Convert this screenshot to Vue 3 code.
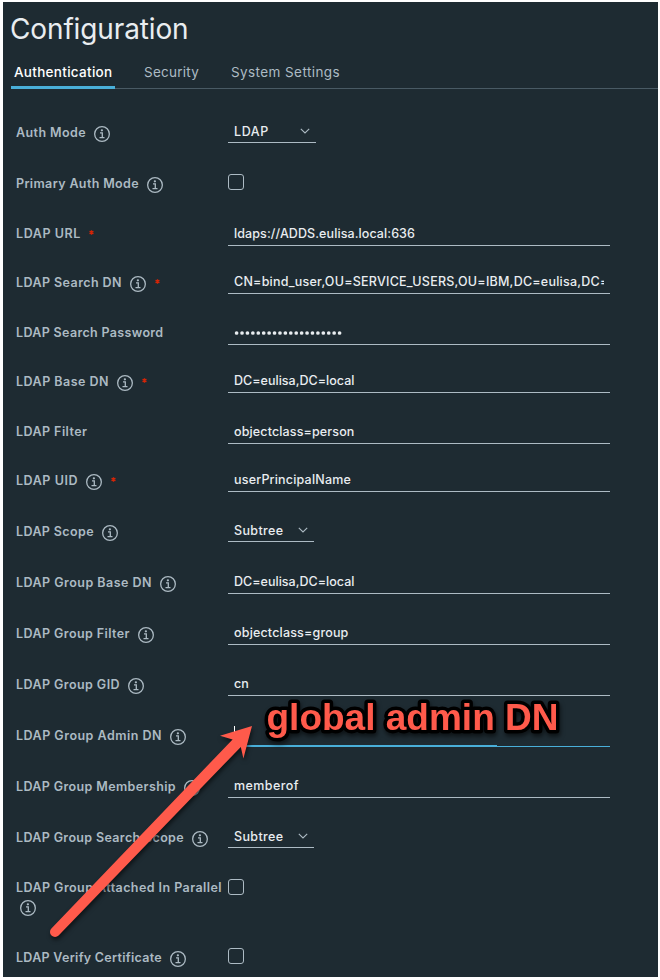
<script setup>
// Spreads the letters of a text so that it fills the given width.
const vFit = {
  mounted(el, { value }) {
    const natural = el.getBoundingClientRect().width
    el.style.letterSpacing = (value - natural) / el.textContent.length + 'px'
  },
}

const tabs = [
  { text: 'Authentication', width: 98.5, active: true },
  { text: 'Security', width: 55 },
  { text: 'System Settings', width: 109 },
]

const rows = [
  { label: 'Auth Mode', w: 70, info: true, h: 51, kind: 'select', value: 'LDAP', vw: 35, wide: true },
  { label: 'Primary Auth Mode', w: 123, info: true, h: 50, kind: 'check' },
  { label: 'LDAP URL', w: 65, required: true, h: 49, kind: 'input', value: 'ldaps://ADDS.eulisa.local:636', vw: 181, low: true },
  { label: 'LDAP Search DN', w: 106, info: true, required: true, h: 50, kind: 'input', value: 'CN=bind_user,OU=SERVICE_USERS,OU=IBM,DC=eulisa,DC=', vw: 374.5 },
  { label: 'LDAP Search Password', w: 147.5, h: 49, kind: 'password', low: true },
  { label: 'LDAP Base DN', w: 93, info: true, required: true, h: 50, kind: 'input', value: 'DC=eulisa,DC=local', vw: 120.5 },
  { label: 'LDAP Filter', w: 71.5, h: 49, kind: 'input', value: 'objectclass=person', vw: 120.5, low: true },
  { label: 'LDAP UID', w: 62, info: true, required: true, h: 51, kind: 'input', value: 'userPrincipalName', vw: 117 },
  { label: 'LDAP Scope', w: 78, info: true, h: 51, kind: 'select', value: 'Subtree', vw: 49.5 },
  { label: 'LDAP Group Base DN', w: 136, info: true, h: 51, kind: 'input', value: 'DC=eulisa,DC=local', vw: 120.5 },
  { label: 'LDAP Group Filter', w: 114, info: true, h: 51, kind: 'input', value: 'objectclass=group', vw: 114.5 },
  { label: 'LDAP Group GID', w: 104, info: true, h: 51, kind: 'input', value: 'cn', vw: 15 },
  { label: 'LDAP Group Admin DN', w: 146, info: true, h: 51, kind: 'focus' },
  { label: 'LDAP Group Membership', w: 160, info: true, h: 51, kind: 'input', value: 'memberof', vw: 65 },
  { label: 'LDAP Group Search Scope', w: 168, info: true, h: 50, kind: 'select', value: 'Subtree', vw: 49.5 },
  { label: 'LDAP Group Attached In Parallel', w: 206, info: true, wrap: true, h: 70, kind: 'check', low: true },
  { label: 'LDAP Verify Certificate', w: 146, info: true, h: 30, kind: 'check' },
]
</script>

<template>
  <div class="frame">
    <main class="panel">
      <h1><span v-fit="178.5">Configuration</span></h1>
      <nav class="tabs">
        <a v-for="t in tabs" :key="t.text" :class="['tab', { active: t.active }]"><span v-fit="t.width">{{ t.text }}</span></a>
      </nav>
      <form class="form">
        <div v-for="r in rows" :key="r.label" class="row" :style="{ height: r.h + 'px' }">
          <div :class="['label', { wrap: r.wrap }]">
            <span v-fit="r.w" class="name">{{ r.label }}</span>
            <svg v-if="r.info" class="info" width="16" height="16" viewBox="0 0 16 16">
              <circle cx="8" cy="8" r="7.35" />
              <path d="M6 6.8h2.3v4.7M5.5 11.6h5" />
              <circle class="dot" cx="7.9" cy="4.3" r="1.15" />
            </svg>
            <svg v-if="r.required" :class="['star', { near: r.info }]" width="5" height="5" viewBox="0 0 5 5">
              <path d="M2.5 .3v4.4M.5 1.4l4 2.2M4.5 1.4l-4 2.2" />
            </svg>
          </div>
          <div v-if="r.kind === 'check'" :class="['check', { low: r.low }]"></div>
          <div v-else-if="r.kind === 'select'" :class="['select', { wide: r.wide }]">
            <span v-fit="r.vw">{{ r.value }}</span>
            <svg class="chevron" width="10" height="6" viewBox="0 0 10 6"><path d="M.8 .8 5 4.9 9.2 .8" /></svg>
          </div>
          <div v-else :class="['input', r.kind, { low: r.low }]">
            <div class="clip">
              <span v-if="r.kind === 'input'" v-fit="r.vw">{{ r.value }}</span>
              <svg v-else-if="r.kind === 'password'" class="dots" width="110" height="22" viewBox="0 0 110 22">
                <circle v-for="n in 20" :key="n" :cx="2.6 + (n - 1) * 5.42" cy="11" r="1.85" />
              </svg>
              <i v-else class="caret"></i>
            </div>
          </div>
        </div>
      </form>
    </main>
    <svg class="note" width="660" height="980" viewBox="0 0 660 980">
      <path class="arrow" d="M51.4 928.4 232.6 739.4 220 735.8 252 726 243.4 758.4 240.8 746.9 58.6 935.4A5 5 0 0 1 51.4 928.4Z" />
      <text x="266.5" y="730" textLength="292" lengthAdjust="spacingAndGlyphs">global admin DN</text>
    </svg>
  </div>
</template>

<style>
body { margin: 0; background: #fff; }
</style>

<style scoped>
.frame {
  position: relative;
  box-sizing: border-box;
  width: 660px;
  height: 980px;
  padding: 2px 2px 3px 3px;
  overflow: hidden;
  background: #fff;
  font-family: Inter, "Open Sans", sans-serif;
}
.panel { height: 975px; background: #1e2b32; overflow: hidden; }
span { white-space: nowrap; }
h1 {
  margin: 0;
  padding: 10px 0 0 7px;
  height: 46px;
  box-sizing: border-box;
  font-size: 28px;
  line-height: 34px;
  font-weight: 400;
  color: #e9edf0;
}
.tabs {
  display: flex;
  gap: 26px;
  height: 41px;
  margin-left: 8px;
  box-shadow: inset 0 -1px #495a64;
}
.tab {
  box-sizing: border-box;
  height: 41px;
  padding: 14px 3px 0;
  font-size: 13.5px;
  line-height: 20px;
  color: #adbbc4;
}
.tab.active { width: 104px; color: #fff; font-weight: 500; border-bottom: 3px solid #49afd9; }
.form { padding: 33px 0 0 13px; }
.row { display: flex; align-items: flex-start; }
.label {
  display: flex;
  flex: 0 0 212px;
  align-items: flex-start;
  font-size: 12.5px;
  font-weight: 600;
  line-height: 22px;
  color: #acbac3;
}
.label.wrap { flex-wrap: wrap; }
.info { flex: none; margin: 4px 0 0 8px; fill: none; stroke: #acbac3; stroke-width: 1.3; }
.info .dot { fill: #acbac3; stroke: none; }
.wrap .info { margin: 1px 90px 0 4px; }
.star { flex: none; margin: 7px 0 0 8px; fill: none; stroke: #d32507; stroke-width: 1.4; }
.star.near { margin-left: 9px; }
.input {
  box-sizing: border-box;
  width: 382px;
  height: 23px;
  margin-top: -1px;
  padding: 0 6px;
  border-bottom: 1px solid #adbbc4;
  font-size: 12.5px;
  font-weight: 500;
  line-height: 22px;
  color: #e9edf0;
}
.input.low { margin-top: 0; }
.clip { height: 22px; overflow: hidden; }
.dots { display: block; fill: #e9edf0; }
.input.focus { border-bottom-color: #49afd9; background: linear-gradient(#49afd9, #49afd9) 0 100% / 269px 1px no-repeat; }
.caret { display: block; width: 1px; height: 15px; margin-top: 2px; background: #fff; }
.select {
  display: flex;
  box-sizing: border-box;
  width: 86px;
  height: 22px;
  margin-top: -1px;
  padding: 0 6px;
  justify-content: space-between;
  border-bottom: 1px solid #adbbc4;
  font-size: 12.5px;
  font-weight: 500;
  line-height: 22px;
  color: #e9edf0;
}
.select.wide { width: 88px; }
.chevron { margin-top: 7px; fill: none; stroke: #adbbc4; stroke-width: 1.1; }
.check {
  box-sizing: border-box;
  width: 16px;
  height: 16px;
  margin-top: 1px;
  border: 1px solid #adbbc4;
  border-radius: 3px;
}
.check.low { margin-top: 2px; }
.note { position: absolute; inset: 0; filter: drop-shadow(1px 3px 2px rgba(0, 0, 0, .55)); }
.arrow { fill: #ff5a4b; }
.note text {
  font: 700 37px "Liberation Sans", sans-serif;
  fill: #ff5a4b;
  stroke: #000;
  stroke-width: 7px;
  stroke-linejoin: round;
  paint-order: stroke;
}
</style>
